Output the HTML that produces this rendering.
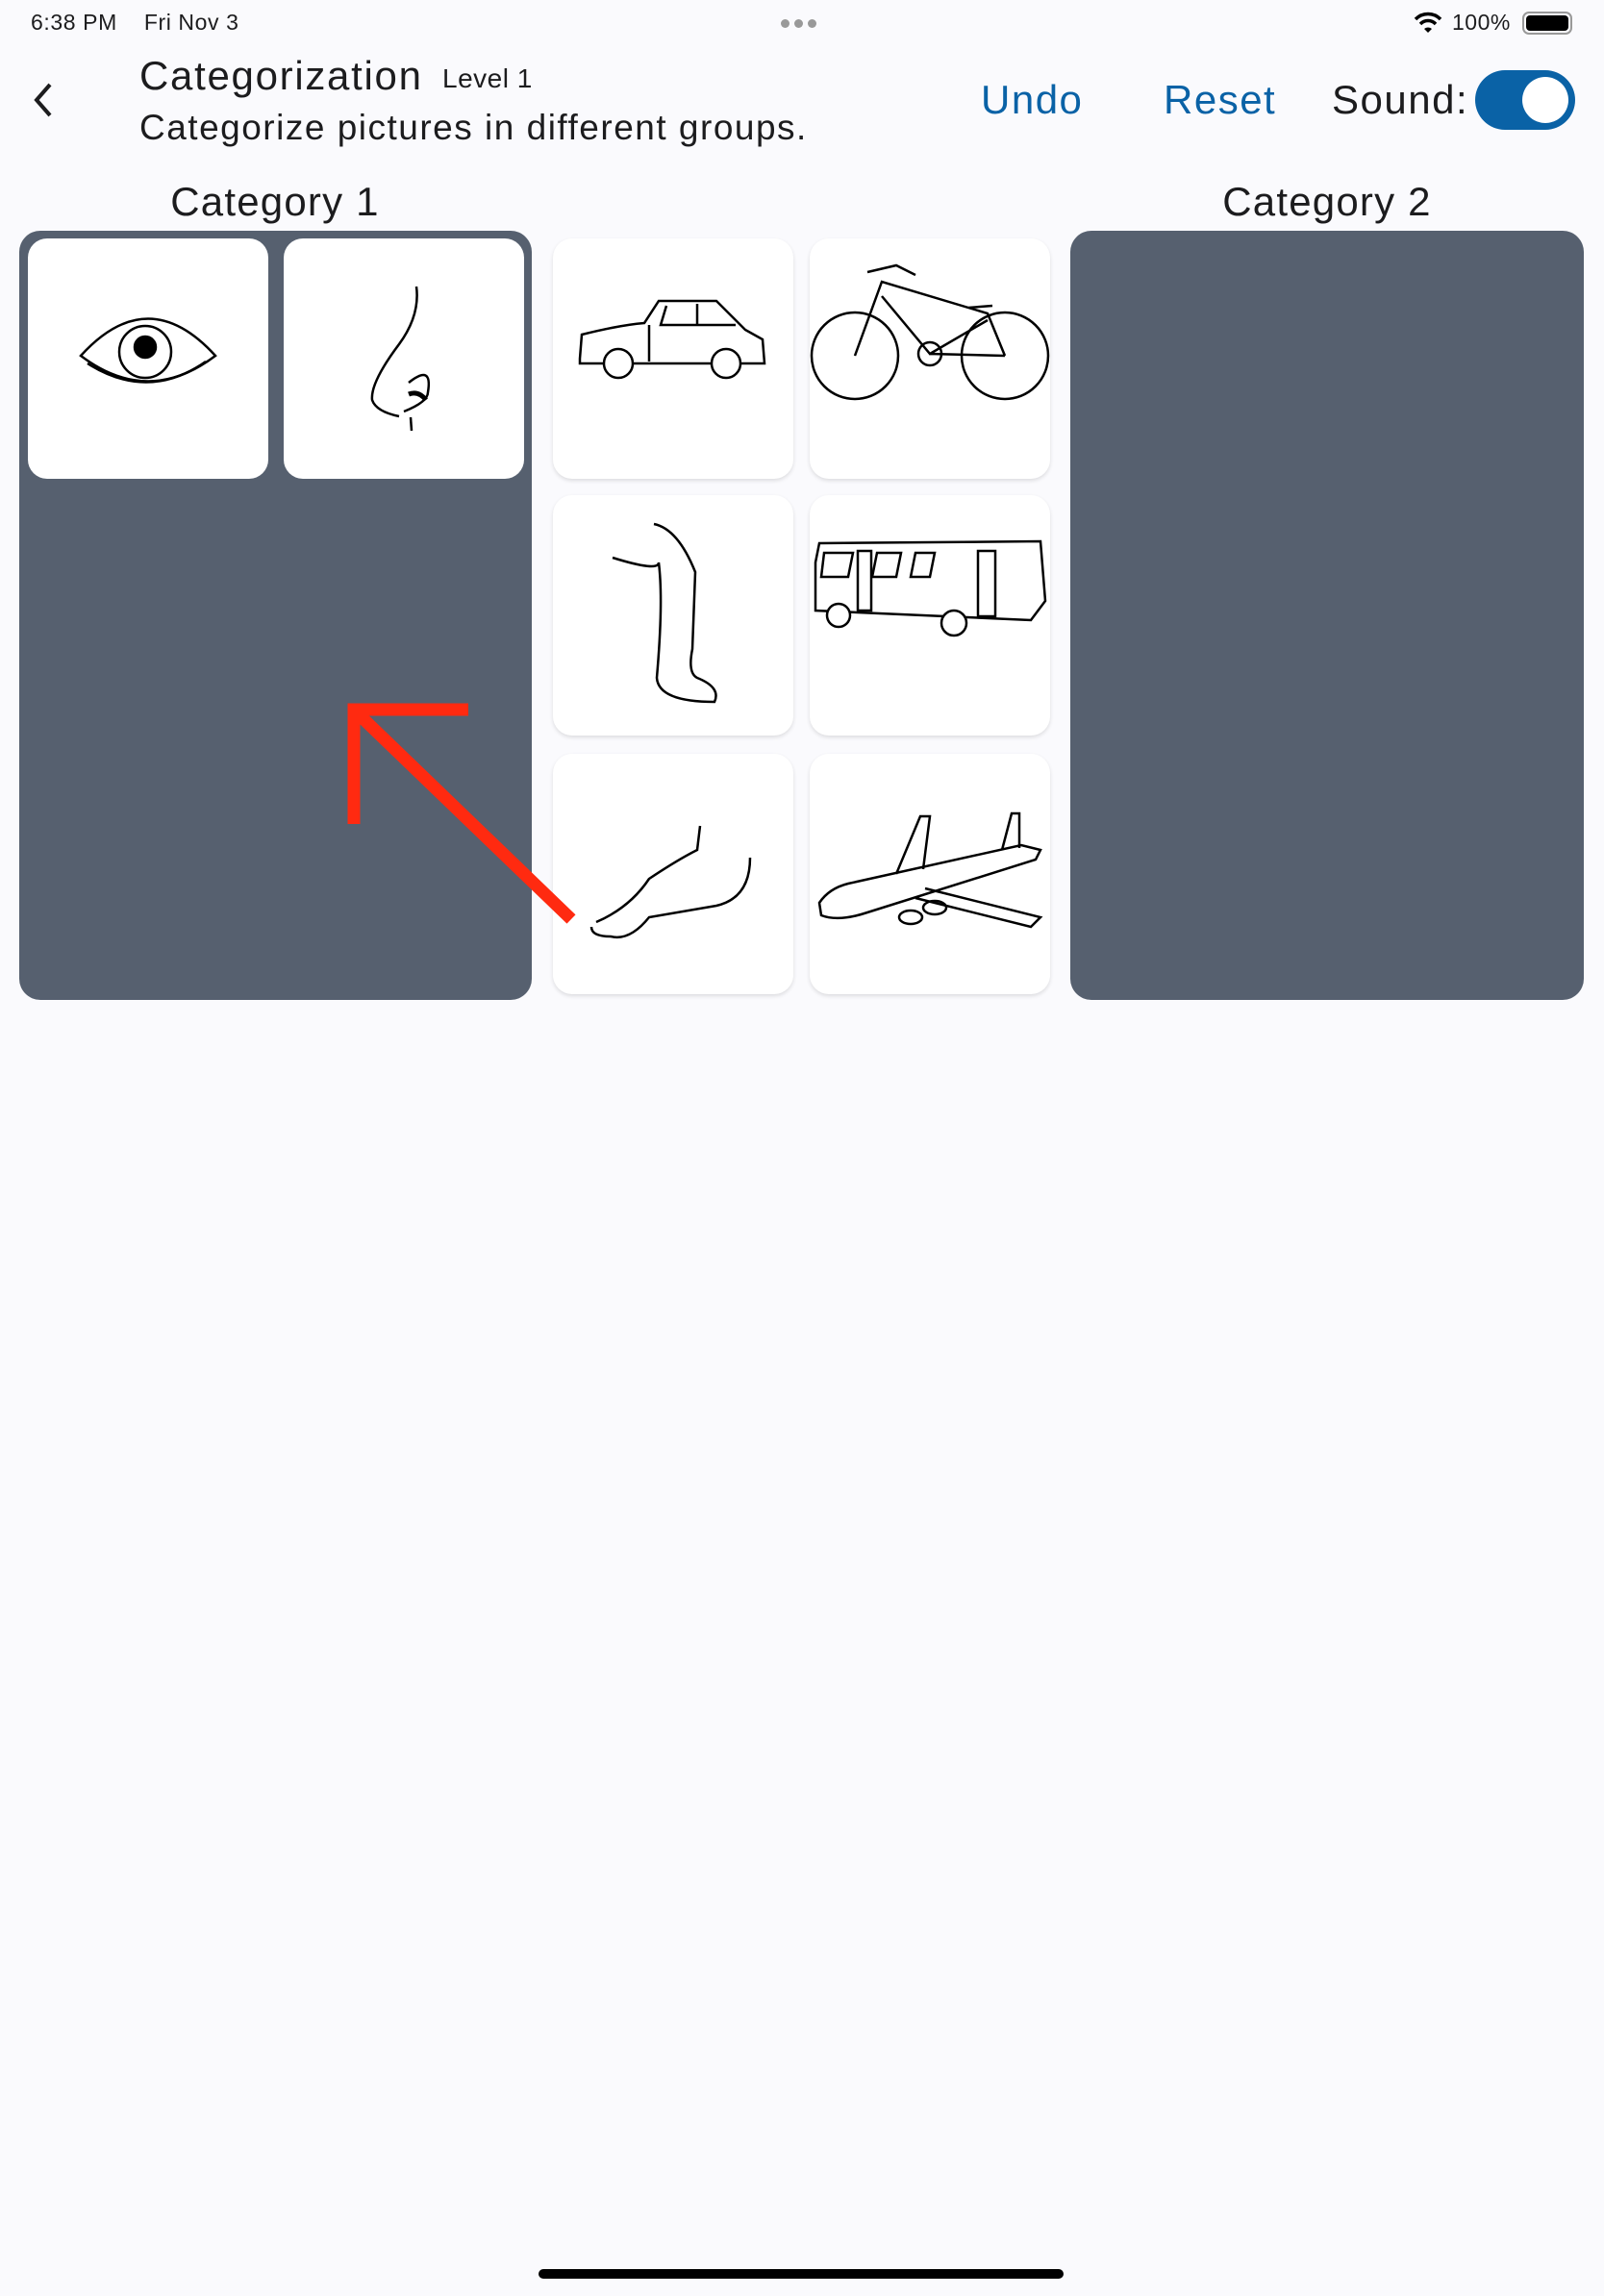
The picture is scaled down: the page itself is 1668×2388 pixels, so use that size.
<!DOCTYPE html>
<html><head><meta charset="utf-8"><style>
*{margin:0;padding:0;box-sizing:border-box}
body{width:1668px;height:2388px;background:#fafafd;font-family:"Liberation Sans",sans-serif;color:#1c1c1e;position:relative;overflow:hidden}
.a{position:absolute}
.panel{position:absolute;background:#56606f;border-radius:22px;top:240px;height:800px;width:533px}
.card{position:absolute;background:#fff;border-radius:20px;width:250px;height:250px;box-shadow:0 2px 4px rgba(0,0,0,0.12)}
.card svg{width:100%;height:100%}
</style></head><body>
<div class="a" style="left:32px;top:10px;font-size:23px;letter-spacing:0.6px">6:38 PM&nbsp;&nbsp;&nbsp;&nbsp;Fri Nov 3</div>
<div class="a" style="left:812px;top:20px;width:44px;height:8px;display:flex;gap:5px"><i style="width:9px;height:9px;border-radius:50%;background:#999"></i><i style="width:9px;height:9px;border-radius:50%;background:#999"></i><i style="width:9px;height:9px;border-radius:50%;background:#999"></i></div>
<svg class="a" style="left:1470px;top:11px" width="30" height="24" viewBox="0 0 30 24"><path d="M2 9 A18 18 0 0 1 28 9" stroke="#000" stroke-width="3.5" fill="none"/><path d="M7 14 A11 11 0 0 1 23 14" stroke="#000" stroke-width="3.5" fill="none"/><path d="M11 19 L15 23 L19 19 A6 6 0 0 0 11 19Z" fill="#000"/></svg>
<div class="a" style="left:1510px;top:10px;font-size:23px;letter-spacing:0.5px">100%</div>
<div class="a" style="left:1583px;top:12px;width:52px;height:24px;border:2px solid #999;border-radius:7px;padding:2px"><div style="width:100%;height:100%;background:#000;border-radius:4px"></div></div>
<svg class="a" style="left:30px;top:84px" width="30" height="40"><path d="M22 4 L8 20 L22 36" stroke="#1c1c1e" stroke-width="4" fill="none"/></svg>
<div class="a" style="left:145px;top:55px;font-size:42px;letter-spacing:1.7px">Categorization</div>
<div class="a" style="left:460px;top:66px;font-size:28px;letter-spacing:0.5px">Level 1</div>
<div class="a" style="left:145px;top:112px;font-size:37px;letter-spacing:1.5px">Categorize pictures in different groups.</div>
<div class="a" style="left:1020px;top:80px;font-size:42px;color:#0a62a6;letter-spacing:1.5px">Undo</div>
<div class="a" style="left:1210px;top:80px;font-size:42px;color:#0a62a6;letter-spacing:1.5px">Reset</div>
<div class="a" style="left:1385px;top:80px;font-size:42px;letter-spacing:1.5px">Sound:</div>
<div class="a" style="left:1534px;top:73px;width:104px;height:62px;border-radius:31px;background:#0a62a6"><div style="position:absolute;right:7px;top:7px;width:48px;height:48px;border-radius:50%;background:#fff"></div></div>
<div class="a" style="left:0;width:572px;top:186px;text-align:center;font-size:42px;letter-spacing:1.2px">Category 1</div>
<div class="a" style="left:1113px;width:534px;top:186px;text-align:center;font-size:42px;letter-spacing:1.2px">Category 2</div>
<div class="panel" style="left:20px"></div>
<div class="panel" style="left:1113px;width:534px"></div>
<div class="card" style="left:29px;top:248px;box-shadow:none"><svg viewBox="0 0 250 250" fill="none" stroke="#000" stroke-width="2.5"><path d="M55 122 Q125 45 195 122 Q125 175 55 122Z"/><circle cx="122" cy="118" r="27"/><circle cx="122" cy="113" r="11" fill="#000"/><path d="M62 130 Q125 170 185 128"/></svg></div>
<div class="card" style="left:295px;top:248px;box-shadow:none"><svg viewBox="0 0 250 250" fill="none" stroke="#000" stroke-width="2.5"><path d="M138 50 Q142 80 120 110 Q90 150 92 168 Q96 180 120 185"/><path d="M125 180 Q150 170 150 160 Q155 130 130 150"/><path d="M130 162 Q140 158 148 168" stroke-width="5"/><path d="M132 186 L133 200"/></svg></div>
<div class="card" style="left:575px;top:248px"><svg viewBox="0 0 250 250" fill="none" stroke="#000" stroke-width="2.5"><path d="M28 125 L30 100 Q70 90 95 88 L110 65 L170 65 L200 95 L218 105 L220 130 L28 130Z"/><path d="M100 90 L100 128 M150 68 L150 90 M118 70 L112 90 L190 90"/><circle cx="68" cy="130" r="15" fill="#fff"/><circle cx="180" cy="130" r="15" fill="#fff"/></svg></div>
<div class="card" style="left:842px;top:248px"><svg viewBox="0 0 250 250" fill="none" stroke="#000" stroke-width="2.5"><circle cx="47" cy="122" r="45"/><circle cx="203" cy="122" r="45"/><path d="M47 122 L75 45 L185 78 L203 122 M75 60 L125 120 L185 85 M125 120 L203 122 M60 35 L90 28 L110 38 M165 72 L190 70"/><circle cx="125" cy="120" r="12"/></svg></div>
<div class="card" style="left:575px;top:515px"><svg viewBox="0 0 250 250" fill="none" stroke="#000" stroke-width="2.5"><path d="M62 65 Q110 80 110 70 Q115 110 108 190 Q110 215 168 215 Q175 200 150 190 Q140 185 145 160 L148 80 Q130 35 105 30"/></svg></div>
<div class="card" style="left:842px;top:515px"><svg viewBox="0 0 250 250" fill="none" stroke="#000" stroke-width="2.5"><path d="M6 70 L10 50 L240 48 L245 110 L230 130 L6 120Z"/><path d="M15 60 L45 60 L40 85 L12 85Z M70 60 L95 60 L90 85 L65 85Z M110 60 L130 60 L125 85 L105 85Z"/><rect x="50" y="58" width="14" height="62"/><rect x="175" y="58" width="18" height="68"/><circle cx="30" cy="125" r="12" fill="#fff"/><circle cx="150" cy="133" r="13" fill="#fff"/></svg></div>
<div class="card" style="left:575px;top:784px"><svg viewBox="0 0 250 250" fill="none" stroke="#000" stroke-width="2.5"><path d="M45 175 Q80 160 100 130 Q130 110 150 100 L153 75 M205 108 Q205 150 170 158 Q130 165 100 170 Q80 195 60 190 Q40 190 40 180"/></svg></div>
<div class="card" style="left:842px;top:784px"><svg viewBox="0 0 250 250" fill="none" stroke="#000" stroke-width="2.5"><path d="M10 155 Q20 140 40 135 L220 95 L240 100 L235 110 L60 165 Q30 175 12 168Z"/><path d="M90 125 L115 65 L125 65 L118 120 M120 140 L240 170 L230 180 L110 150 M200 100 L210 62 L218 62 L218 98"/><ellipse cx="105" cy="170" rx="12" ry="7"/><ellipse cx="130" cy="160" rx="12" ry="7"/></svg></div>
<svg class="a" style="left:0;top:0" width="1668" height="1100"><path d="M594 956 L374 744 M368 857 L368 738 L487 738" stroke="#ff2a10" stroke-width="13" fill="none"/></svg>
<div class="a" style="left:560px;top:2360px;width:546px;height:10px;border-radius:5px;background:#000"></div>
</body></html>
